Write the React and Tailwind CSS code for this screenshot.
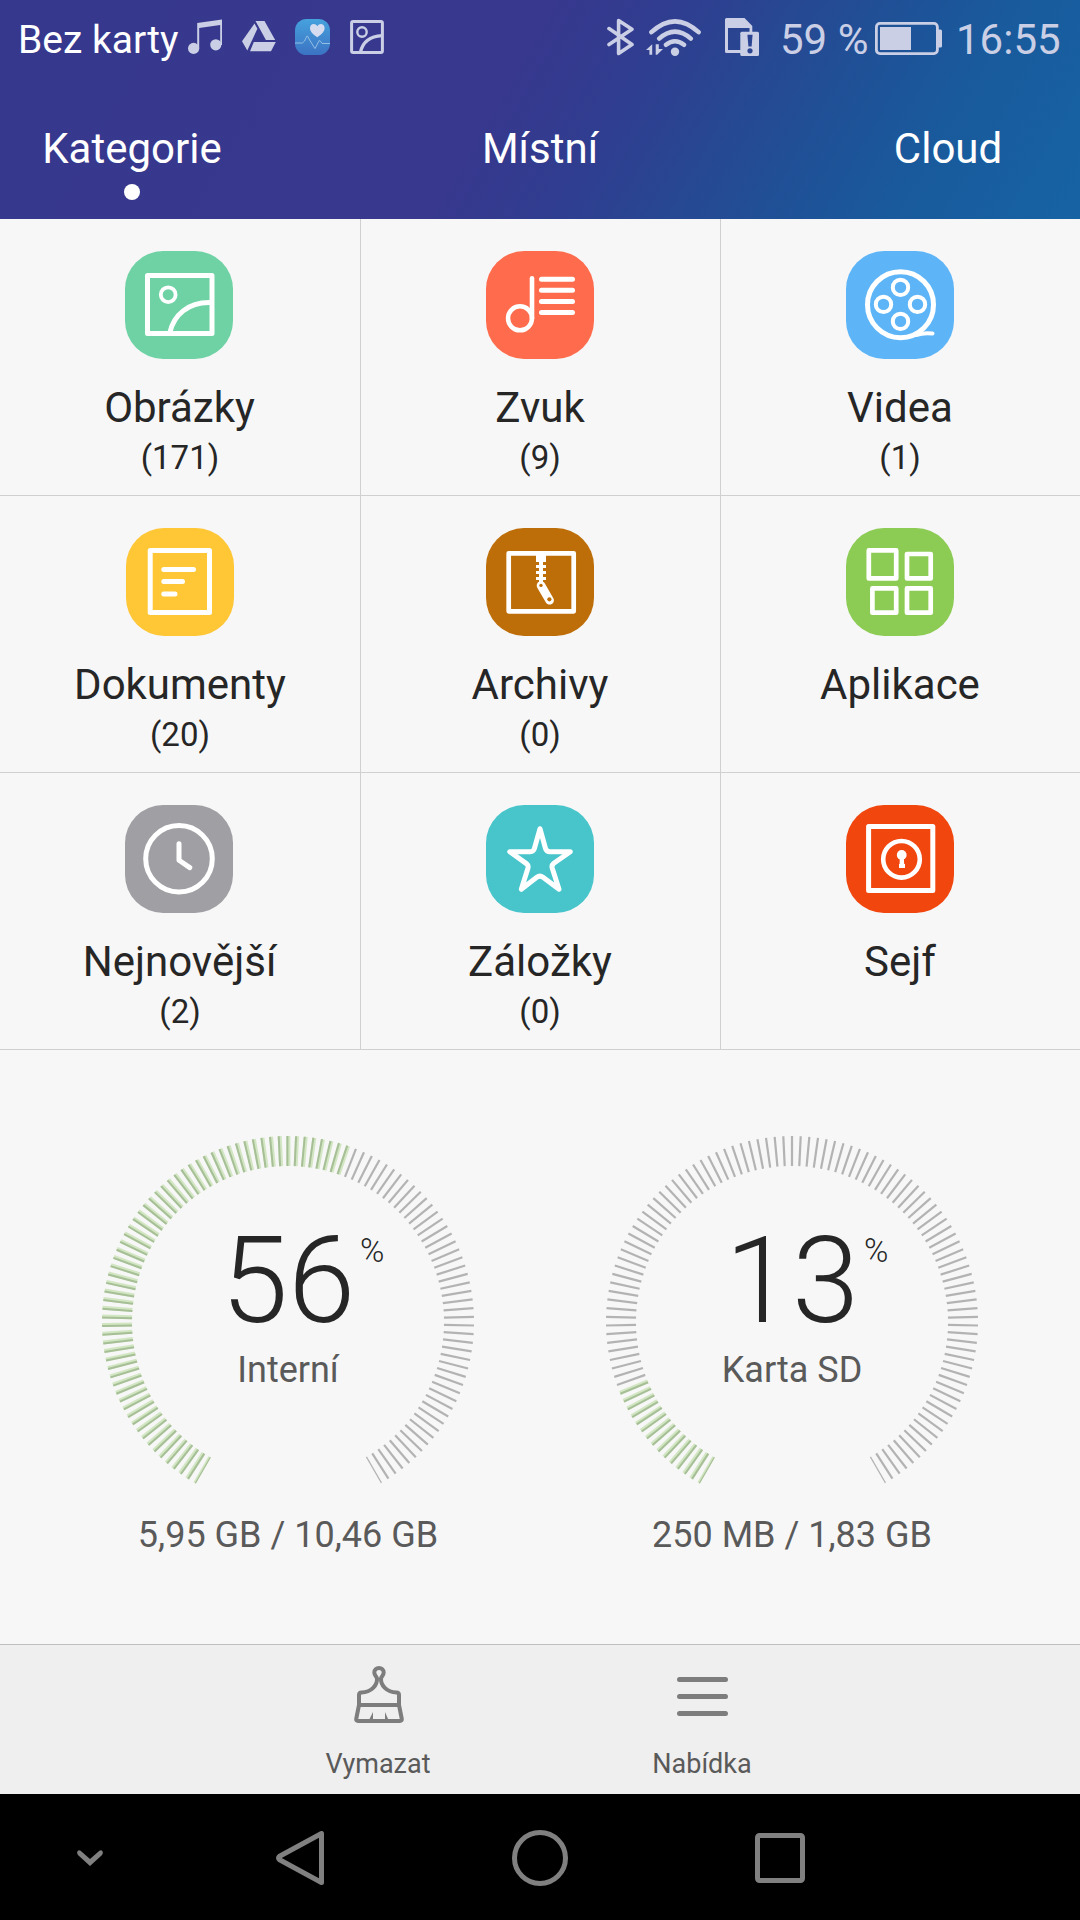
const TICKS = 113;

const categories = [
  { name: 'Obrázky', count: 171, tile: 'bg-[#6fd2a4]', shift: true, icon: <PicturesIcon /> },
  { name: 'Zvuk', count: 9, tile: 'bg-[#ff6b4d]', icon: <AudioIcon /> },
  { name: 'Videa', count: 1, tile: 'bg-[#5db5f8]', icon: <VideoIcon /> },
  { name: 'Dokumenty', count: 20, tile: 'bg-[#ffc636]', icon: <DocumentsIcon /> },
  { name: 'Archivy', count: 0, tile: 'bg-[#be6e09]', icon: <ArchivesIcon /> },
  { name: 'Aplikace', tile: 'bg-[#8ccb54]', icon: <AppsIcon /> },
  { name: 'Nejnovější', count: 2, tile: 'bg-[#a09fa4]', shift: true, icon: <RecentIcon /> },
  { name: 'Záložky', count: 0, tile: 'bg-[#48c4cb]', icon: <StarIcon /> },
  { name: 'Sejf', tile: 'bg-[#f1460e]', icon: <SafeIcon /> },
];

const storages = [
  { name: 'Interní', percent: 56, usage: '5,95 GB / 10,46 GB' },
  { name: 'Karta SD', percent: 13, usage: '250 MB / 1,83 GB' },
];

function TileIcon({ children, strokeWidth = 5 }) {
  return (
    <svg
      viewBox="0 0 108 108"
      className="block size-[108px]"
      fill="none"
      stroke="#fff"
      strokeWidth={strokeWidth}
      strokeLinecap="round"
      strokeLinejoin="round"
    >
      {children}
    </svg>
  );
}

function PicturesIcon() {
  return (
    <TileIcon>
      <rect x="22.5" y="24.5" width="64.5" height="58" />
      <circle cx="43.2" cy="43.7" r="7.4" strokeWidth="3.8" />
      <path d="M45 81C49 64 63 51.5 84 51.5" />
    </TileIcon>
  );
}

function AudioIcon() {
  return (
    <TileIcon>
      <circle cx="34" cy="67.3" r="12" strokeWidth="4.5" />
      <path d="M46 27.3V67.3" strokeWidth="4.6" />
      <path d="M55.5 28.3H86.5M55.5 39.3H86.5M55.5 50.4H86.5M55.5 61.6H86.5" />
    </TileIcon>
  );
}

function VideoIcon() {
  return (
    <TileIcon>
      <circle cx="54.5" cy="53.7" r="33" />
      <g strokeWidth="4">
        <circle cx="54.5" cy="36.4" r="7.7" />
        <circle cx="37.5" cy="53.4" r="7.7" />
        <circle cx="71.5" cy="53.4" r="7.7" />
        <circle cx="54.5" cy="70.4" r="7.7" />
        <path d="M70 84Q78 81.5 86.5 82.6" />
      </g>
    </TileIcon>
  );
}

function DocumentsIcon() {
  return (
    <TileIcon>
      <rect x="24.2" y="22.5" width="59.3" height="62" />
      <path d="M37.8 41.5H67.5M37.8 53.6H56.5M37.8 66H49" />
    </TileIcon>
  );
}

function ArchivesIcon() {
  return (
    <TileIcon strokeWidth={4.7}>
      <rect x="22.7" y="25.3" width="65" height="58" />
      <g fill="#fff" stroke="none">
        <path d="M50 27H60V34H50ZM53 34H57V54H53ZM50 37H60V40H50ZM50 43H60V46H50ZM50 49H60V52H50Z" />
      </g>
      <path d="M55 57.5L63.6 72.3" strokeWidth="8.6" />
      <g fill="#be6e09" stroke="none">
        <circle cx="55" cy="57.4" r="1.7" />
        <circle cx="63.4" cy="71.3" r="2.1" />
      </g>
    </TileIcon>
  );
}

function AppsIcon() {
  return (
    <TileIcon strokeWidth={4.7}>
      <rect x="22.8" y="22.4" width="27.4" height="28" />
      <rect x="61" y="26" width="23.7" height="24.4" />
      <rect x="26.4" y="60.4" width="23.8" height="24.3" />
      <rect x="61" y="60.4" width="23.7" height="24.3" />
    </TileIcon>
  );
}

function RecentIcon() {
  return (
    <TileIcon>
      <circle cx="54" cy="53.8" r="33.3" />
      <path d="M54 38.7V55.2L64.8 62.6" />
    </TileIcon>
  );
}

function StarIcon() {
  return (
    <TileIcon>
      <path d="M54 23.7L59.5 43.5Q60.4 46.7 64 46.7H84.3L67.8 58.3Q65.4 60.2 66.2 63L73 84.3L57 72.3Q53.9 70 50.8 72.3L35.3 84.3L42 63Q42.6 60.3 40.4 58.6L23.8 46.7H44.2Q47.6 46.7 48.4 43.5Z" />
    </TileIcon>
  );
}

function SafeIcon() {
  return (
    <TileIcon>
      <rect x="22.6" y="21.5" width="64.2" height="64" />
      <circle cx="55.5" cy="54.3" r="18.3" strokeWidth="4.6" />
      <g fill="#fff" stroke="none">
        <circle cx="55.7" cy="50" r="4.9" />
        <path d="M53.8 53H57.8L58.2 59L59 59V63H53V59L53.6 59Z" />
      </g>
    </TileIcon>
  );
}

function StatusBar() {
  return (
    <div className="flex h-[74px] items-center pl-[18px] text-[#cacfe5]">
      <span className="mt-[5px] w-[170px] shrink-0 text-[39px] leading-[44px] whitespace-nowrap text-white">Bez karty</span>

      <svg viewBox="0 0 35 36" className="h-9 w-[35px] shrink-0" fill="currentColor">
        <circle cx="5.6" cy="29.4" r="5.6" />
        <circle cx="27.8" cy="25.8" r="5.6" />
        <path d="M9.2 4L34 0.4V26H32.2V6L11.2 9V29.5H9.2Z" />
      </svg>
      <svg viewBox="0 0 35 34" className="ml-[19px] h-[34px] w-[35px] shrink-0" fill="currentColor">
        <path d="M12.5 3.5L15.4 8.7L5.3 30.5L0 21.3Z" />
        <path d="M13.5 1H22.5L33.2 20H23.9Z" />
        <path d="M11.8 22H33.8L29 31.3H8Z" />
      </svg>
      <svg viewBox="0 0 35 36" className="ml-[18px] h-9 w-[35px] shrink-0">
        <defs>
          <linearGradient id="health" x1="0" y1="0" x2="0" y2="1">
            <stop offset="0" stopColor="#46a2dd" />
            <stop offset="1" stopColor="#3b72c3" />
          </linearGradient>
        </defs>
        <rect width="35" height="36" rx="11.5" fill="url(#health)" />
        <path
          d="M22.3 18.2C17.5 14.8 15 12.3 15 8.9C15 4.8 20.2 3.6 22.3 7.2C24.4 3.6 29.6 4.8 29.6 8.9C29.6 12.3 27 14.8 22.3 18.2Z"
          fill="#d5dcf0"
        />
        <path
          d="M0 24H7.5Q9.3 23.5 12 17Q13 16.5 14 20L20 29.6L24.2 21.5Q25.5 21.5 27 24.5H35"
          fill="none"
          stroke="#93bfe6"
          strokeWidth="1"
        />
      </svg>
      <svg viewBox="0 0 34 34" className="ml-5 size-[34px] shrink-0" fill="none" stroke="currentColor" strokeWidth="3">
        <rect x="1.6" y="1.6" width="30.8" height="30.8" rx="1.5" />
        <circle cx="12" cy="12" r="4.7" strokeWidth="2.4" />
        <path d="M10.5 32Q14 16.5 32 15.6" strokeWidth="3.4" />
      </svg>

      <svg
        viewBox="0 0 27 38"
        className="ml-[223px] h-[38px] w-[27px] shrink-0"
        fill="none"
        stroke="currentColor"
        strokeWidth="3.6"
        strokeLinejoin="round"
        strokeLinecap="round"
      >
        <path d="M2 10.6L25 26.6L11.6 35.4V2.6L25 11.2L2 26.6" />
      </svg>
      <svg
        viewBox="0 0 56 38"
        className="ml-3 h-[38px] w-14 shrink-0"
        fill="none"
        stroke="currentColor"
        strokeWidth="4.5"
        strokeLinecap="round"
      >
        <path d="M5.4 14.2Q29 -7.6 52.6 14.2M13.2 20.6Q29 6.6 44.8 20.6M20 26.8Q29 19.6 38 26.8" />
        <g fill="currentColor" stroke="none">
          <circle cx="29" cy="33.8" r="4.2" />
          <path d="M0 32L6.2 26.3V36.7H3.4V32ZM9.7 26.3H12.8V31H17L11.2 36.7H9.7Z" />
        </g>
      </svg>
      <svg viewBox="0 0 34 38" className="ml-[23px] h-[38px] w-[34px] shrink-0" fill="currentColor">
        <path fillRule="evenodd" d="M1.5 0H19.5L27.3 8V35H1.5Q0 35 0 33.5V1.5Q0 0 1.5 0ZM3 10V32H24.5V10Z" />
        <rect x="15.3" y="13.8" width="18.7" height="24.2" rx="1.5" />
        <path d="M22.4 16.7H27.6L26.6 28.5H23.4Z" fill="#2b4492" />
        <circle cx="25" cy="32.8" r="2.6" fill="#2b4492" />
      </svg>
      <span className="mt-[5px] ml-[21px] w-[95px] shrink-0 text-[42px] leading-[46px] whitespace-nowrap">59 %</span>
      <svg viewBox="0 0 67 33" className="mt-[3px] h-[33px] w-[67px] shrink-0" fill="currentColor">
        <rect x="1.4" y="1.4" width="61" height="30.2" rx="3.5" fill="none" stroke="currentColor" strokeWidth="2.8" />
        <rect x="5" y="5" width="31" height="23" />
        <path d="M63 7.5H65.5Q67 7.5 67 9V24Q67 25.5 65.5 25.5H63Z" />
      </svg>
      <span className="mt-[5px] ml-[14px] text-[42px] leading-[46px]">16:55</span>
    </div>
  );
}

function Header() {
  return (
    <header className="h-[219px] bg-[linear-gradient(120deg,#36388e_0%,#37388e_46%,#2f3e90_57%,#264993_67%,#1f5197_75%,#195a9c_84%,#1663a4_100%)]">
      <StatusBar />
      <nav className="flex justify-between pt-[50px] text-[42px] leading-[50px] text-white">
        <div className="flex w-[264px] flex-col items-center">
          <span>Kategorie</span>
          <span className="mt-[10px] size-4 rounded-full bg-white" />
        </div>
        <span className="w-[264px] text-center">Místní</span>
        <span className="w-[264px] text-center">Cloud</span>
      </nav>
    </header>
  );
}

function Category({ name, count, tile, shift, icon }) {
  return (
    <div className="flex h-[277px] flex-col items-center border-b border-[#d0d0d0] pt-8">
      <div className={`size-[108px] shrink-0 rounded-[38px] ${tile} ${shift ? 'mr-0.5' : ''}`}>{icon}</div>
      <span className={`mt-6 text-[42px] leading-[50px] ${shift ? 'mr-px' : ''}`}>{name}</span>
      {count !== undefined && <span className="mt-[5px] text-[33px] leading-10">({count})</span>}
    </div>
  );
}

function Gauge({ percent }) {
  const step = 300 / (TICKS - 1);
  const filled = (percent / 100) * TICKS;

  return (
    <svg viewBox="-186 -186 372 372" className="col-start-1 row-start-1 size-[372px]">
      {Array.from({ length: TICKS }, (_, i) => {
        const edge = i === 0 || i === TICKS - 1;
        return (
          <g key={i} transform={`rotate(${-150 + i * step})`}>
            {i <= filled ? (
              <>
                <rect x={edge ? -1 : -1.6} y="-186" width={edge ? 2.8 : 4} height="30" fill="#d3e6c3" />
                <rect x={edge ? -1 : -1.6} y="-186" width={edge ? 1.2 : 2} height="30" fill="#a6bf96" />
              </>
            ) : (
              <rect x="-1.1" y="-186" width={edge ? 1.2 : 2.2} height="30" fill="#b3b3b3" />
            )}
          </g>
        );
      })}
    </svg>
  );
}

function Storage({ name, percent, usage }) {
  return (
    <div className="flex w-[372px] flex-col items-center text-[36px] text-[#5a5a5a]">
      <div className="grid">
        <Gauge percent={percent} />
        <div className="col-start-1 row-start-1 flex flex-col items-center pt-[77px]">
          <div className="flex text-[#262626]">
            <span className="w-[33px]" />
            <span className="text-[121px] leading-[136px] font-light">{percent}</span>
            <span className="w-[33px] pt-[18px] pl-[5px] text-[33px] leading-10 font-light">%</span>
          </div>
          <span className="leading-[43px]">{name}</span>
        </div>
      </div>
      <span className="mt-[6px] leading-[43px] whitespace-nowrap">{usage}</span>
    </div>
  );
}

function Toolbar() {
  return (
    <footer className="flex h-[150px] justify-center border-t border-[#c0c0c0] bg-[#efefef] text-[27px] text-[#5a5a5a]">
      <div className="flex w-[324px] flex-col items-center pt-[21px]">
        <svg
          viewBox="0 0 50 57"
          className="ml-0.5 h-[57px] w-[50px]"
          fill="none"
          stroke="#7d7d7d"
          strokeWidth="4"
          strokeLinejoin="round"
        >
          <path d="M23 12.5C22.8 10.5 20.3 9.5 20.3 6.6C20.3 3.8 22.4 2 25 2S29.7 3.8 29.7 6.6C29.7 9.5 27.2 10.5 27 12.5C26.6 19 32.5 26.4 42.5 26.4Q45 26.4 45 29V39L47.8 53Q48 55 46 55H4Q2 55 2.2 53L5 39V29Q5 26.4 7.5 26.4C17.5 26.4 23.4 19 23 12.5Z" />
          <path d="M5 39H45" />
          <path d="M19 46V54H15ZM31 46V54H34.5Z" fill="#7d7d7d" stroke="none" />
        </svg>
        <span className="mt-[25px] leading-8">Vymazat</span>
      </div>
      <div className="flex w-[324px] flex-col items-center pt-[21px]">
        <svg viewBox="0 0 51 57" className="h-[57px] w-[51px]" stroke="#7d7d7d" strokeWidth="5" strokeLinecap="round">
          <path d="M2.5 13.5H48.5M2.5 30.5H48.5M2.5 47.5H48.5" />
        </svg>
        <span className="mt-[25px] leading-8">Nabídka</span>
      </div>
    </footer>
  );
}

function NavigationBar() {
  return (
    <div className="flex h-[126px] items-center bg-black pt-[2px] pl-[77px]">
      <svg viewBox="0 0 26 16" className="h-4 w-[26px]" fill="#808080">
        <path d="M0.4 1.4Q1.6 -0.6 3.6 0.8L13 9L22.4 0.8Q24.4 -0.6 25.6 1.4Q26.4 3.6 24.8 5.2L13 16L1.2 5.2Q-0.4 3.6 0.4 1.4Z" />
      </svg>
      <svg viewBox="0 0 48 54" className="ml-[173px] h-[54px] w-12" fill="none" stroke="#808080" strokeWidth="5" strokeLinejoin="round">
        <path d="M45.5 2.5V51.5L3.6 28.8Q1.4 27 3.6 25.2Z" />
      </svg>
      <svg viewBox="0 0 56 56" className="ml-[188px] size-14" fill="none" stroke="#808080" strokeWidth="5">
        <circle cx="28" cy="28" r="25.5" />
      </svg>
      <svg viewBox="0 0 50 50" className="ml-[187px] size-[50px]" fill="none" stroke="#808080" strokeWidth="5">
        <rect x="2.5" y="2.5" width="45" height="45" rx="2" />
      </svg>
    </div>
  );
}

export default function App() {
  return (
    <div className="flex h-[1920px] w-[1080px] flex-col overflow-hidden bg-[#f7f7f7] font-[Roboto,'Noto_Sans',sans-serif] text-[#262626]">
      <Header />
      <main className="flex flex-1 flex-col">
        <div className="grid grid-cols-3">
          {categories.map((category, index) => (
            <div key={category.name} className={index % 3 === 0 ? '' : 'border-l border-[#d0d0d0]'}>
              <div className={index % 3 === 0 ? '' : '-ml-px'}>
                <Category {...category} />
              </div>
            </div>
          ))}
        </div>
        <div className="flex justify-between pt-[86px] pr-[102px] pl-[102px]">
          {storages.map((storage) => (
            <Storage key={storage.name} {...storage} />
          ))}
        </div>
      </main>
      <Toolbar />
      <NavigationBar />
    </div>
  );
}
